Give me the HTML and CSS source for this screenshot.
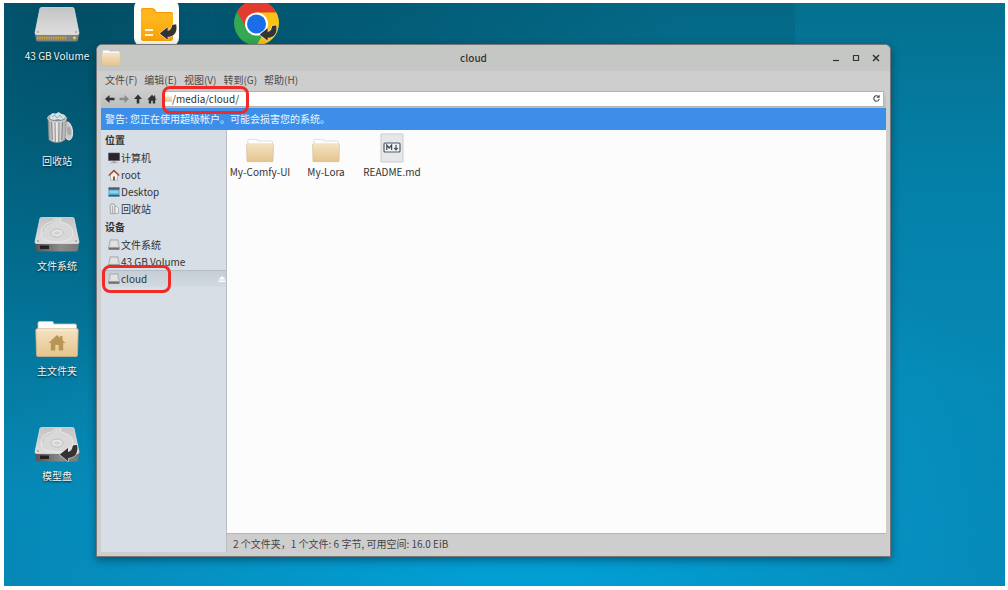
FILE: index.html
```html
<!DOCTYPE html>
<html lang="zh-CN">
<head>
    <meta charset="UTF-8">
    <meta name="viewport" content="width=device-width, initial-scale=1.0">
    <title>cloud</title>
    <link rel="stylesheet" href="styles.css">
</head>
<body>
    <!-- shared icons -->
    <svg class="sprite" aria-hidden="true">
        <defs>
            <linearGradient id="g-folder" x1="0" y1="0" x2="0" y2="1">
                <stop offset="0" stop-color="#f5e2c3"/>
                <stop offset="1" stop-color="#e5c48c"/>
            </linearGradient>
            <linearGradient id="g-metal" x1="0" y1="0" x2="0" y2="1">
                <stop offset="0" stop-color="#c4c4c4"/>
                <stop offset="1" stop-color="#dedede"/>
            </linearGradient>
            <linearGradient id="g-edge" x1="0" y1="0" x2="1" y2="0">
                <stop offset="0" stop-color="#555555"/>
                <stop offset="0.6" stop-color="#8c8c8c"/>
                <stop offset="1" stop-color="#777777"/>
            </linearGradient>
            <linearGradient id="g-can" x1="0" y1="0" x2="1" y2="0">
                <stop offset="0" stop-color="#9c9c9c"/>
                <stop offset="0.4" stop-color="#f0f0f0"/>
                <stop offset="1" stop-color="#a8a8a8"/>
            </linearGradient>
            <linearGradient id="g-yellow" x1="0" y1="0" x2="0" y2="1">
                <stop offset="0" stop-color="#ffb91d"/>
                <stop offset="1" stop-color="#f9a008"/>
            </linearGradient>
        </defs>
        <symbol id="folder" viewBox="0 0 44 36">
            <path d="M3 13V2q0-1.500 1.500-1.500H17q1.500 0 1.500 1.500V3H40q1.500 0 1.500 1.500V13z" fill="#fdfdfd" stroke="#c9c4bb" stroke-width=".8"/>
            <path d="M.8 9q0-1.200 1.200-1.200h40q1.200 0 1.200 1.200L42.500 34q0 1.500-1.500 1.500H3q-1.500 0-1.500-1.500z" fill="url(#g-folder)" stroke="#ccb388" stroke-width=".8"/>
            <path d="M2 9h40" stroke="#fbf0dc"/>
        </symbol>
        <symbol id="disk" viewBox="0 0 46 36">
            <path d="M1 27l1 7q.3 1.500 2 1.500h38q1.700 0 2-1.500l1-7z" fill="url(#g-edge)"/>
            <path d="M7.500 1.500h31q1.300 0 1.600 1.200L45 26q0 1.500-1.500 1.500h-41Q1 27.500 1 26L5.900 2.700q.3-1.200 1.600-1.200z" fill="url(#g-metal)" stroke="#e8e8e8" stroke-width=".7"/>
            <path d="M27 2q-2 4 3 5 9 3 9 10 0 8.500-16 9Q6 25.500 7 17 8 8 17 6q3-1 3-4" fill="#d8d8d8" stroke="#eeeeee" stroke-width=".8"/>
            <path d="M20 2q1 4-5 6-7 3-6 8" fill="none" stroke="#bcbcbc" stroke-width=".7"/>
            <ellipse cx="23" cy="17" rx="6" ry="4" fill="#e4e4e4" stroke="#b6b6b6" stroke-width=".8"/>
            <ellipse cx="23" cy="17" rx="4" ry="2.300" fill="#d2d2d2" stroke="#f4f4f4" stroke-width=".6"/>
            <circle cx="4" cy="25" r=".8" fill="#777"/>
            <circle cx="42" cy="25" r=".8" fill="#777"/>
            <path d="M6 29.500h9v3.500H6z" fill="#222"/>
        </symbol>
        <symbol id="drive-small" viewBox="0 0 12 12">
            <path d="M2 .8h8l1.300 7.700H.7z" fill="#d0d0d0" stroke="#a2a2a2" stroke-width=".7"/>
            <path d="M3 2h6l.6 5H2.400z" fill="#e2e2e2"/>
            <path d="M.5 8.200h11v2.600H.5z" fill="#6f6f6f"/>
            <path d="M1 8h10" stroke="#f5f5f5" stroke-width=".6"/>
        </symbol>
        <symbol id="link-arrow" viewBox="0 0 20 18">
            <path d="M1 10.500L9 4v4q4-.5 5-6.500l4-.5q2 12-9 13v3z" fill="#333" stroke="#e9e9e9" stroke-opacity=".5" stroke-width="2" stroke-linejoin="round"/>
            <path d="M1 10.500L9 4v4q4-.5 5-6.500l4-.5q2 12-9 13v3z" fill="#333"/>
        </symbol>
    </svg>

    <main class="desktop">
        <div class="shortcuts">
            <a class="shortcut" href="#volume">
                <svg class="shortcut-icon" viewBox="0 0 46 36">
                    <path d="M1 28l1 6q.3 1.500 2 1.500h38q1.700 0 2-1.500l1-6z" fill="#808080"/>
                    <path d="M7.500 1.500h31q1.300 0 1.600 1.200L45 27q0 1.500-1.500 1.500h-41Q1 28.500 1 27L5.900 2.700q.3-1.200 1.600-1.200z" fill="url(#g-metal)" stroke="#e8e8e8" stroke-width=".7"/>
                    <circle cx="4" cy="26" r=".8" fill="#777"/>
                    <circle cx="42" cy="26" r=".8" fill="#777"/>
                    <path d="M3 32h30" stroke="#c9a538" stroke-width="3" stroke-dasharray="1.500 .8"/>
                    <circle cx="40.500" cy="32" r="1.400" fill="#e3dc2e"/>
                </svg>
                <span>43 GB Volume</span>
            </a>
            <a class="shortcut" href="#files" aria-label="files">
                <svg class="shortcut-icon app" viewBox="0 0 46 44">
                    <rect x="0" y="-4" width="45" height="48" rx="9" fill="#fffdf8"/>
                    <path d="M7 7q0-2 2-2h9q2 0 3 1.500L22.500 9H37q2 0 2 2v24q0 3-3 3H10q-3 0-3-3z" fill="#f39a05"/>
                    <path d="M7 13h32v22q0 3-3 3H10q-3 0-3-3z" fill="url(#g-yellow)"/>
                    <path d="M7 10q0-4 4-4h6q2 0 3 1.500L22 10h14q3 0 3 3H7z" fill="#ffb61c"/>
                    <path d="M11 27h8M11 32h8" stroke="#fff8d8" stroke-width="2"/>
                    <use href="#link-arrow" x="25" y="20" width="19" height="18"/>
                </svg>
            </a>
            <a class="shortcut" href="#browser" aria-label="browser">
                <svg class="shortcut-icon app" viewBox="0 0 46 44">
                    <circle cx="22.500" cy="20" r="22.500" fill="#34a853"/>
                    <path d="M22.500 20L3 8.800A22.500 22.500 0 0 1 42 8.800z" fill="#e33b2e"/>
                    <path d="M22.500 9.500h19.800A22.500 22.500 0 0 1 22.500 42.500L32.500 25z" fill="#fbc116"/>
                    <path d="M3 8.800L13 26l9.500-6V9.500H3.500z" fill="#e33b2e"/>
                    <circle cx="22.500" cy="21" r="11.500" fill="#fff"/>
                    <circle cx="22.500" cy="21" r="9.500" fill="#1a6fe8"/>
                    <use href="#link-arrow" x="25" y="21" width="19" height="18"/>
                </svg>
            </a>
            <a class="shortcut" href="#trash">
                <svg class="shortcut-icon" viewBox="0 0 46 36">
                    <ellipse cx="34" cy="20" rx="4.500" ry="9" fill="#c9c9c9" stroke="#e4e4e4" transform="rotate(-8 34 20)"/>
                    <ellipse cx="35" cy="20" rx="2" ry="4.500" fill="#a9a9a9" transform="rotate(-8 34 20)"/>
                    <path d="M14 7l1 22q8 5 16 0L32.500 7z" fill="url(#g-can)" stroke="#8b8b8b" stroke-width=".6"/>
                    <path d="M17.500 10l.8 19M21 11l.3 20M25 11l-.2 20M28.500 10l-.7 19" stroke="#858585"/>
                    <ellipse cx="23" cy="7" rx="9.300" ry="4" fill="#878f92" stroke="#e0e0e0"/>
                    <path d="M15.500 6l3-4 3 1 3-2 3 2 3 1 .5 3-4 2-3-1-4 1-4-1z" fill="#d7e2e6"/>
                    <path d="M18 6l3-2 2 3 3-3 2 3" fill="none" stroke="#8fb2be"/>
                </svg>
                <span>回收站</span>
            </a>
            <a class="shortcut" href="#filesystem">
                <svg class="shortcut-icon"><use href="#disk"/></svg>
                <span>文件系统</span>
            </a>
            <a class="shortcut" href="#home">
                <svg class="shortcut-icon" viewBox="0 0 46 36">
                    <use href="#folder" x="1" y="0" width="44" height="36"/>
                    <path d="M23 14l-8.500 8h2.300v7.500h4.500V24h3.400v5.500h4.500V22h2.300l-3-2.800V15h-2.300v2z" fill="#b99555"/>
                </svg>
                <span>主文件夹</span>
            </a>
            <a class="shortcut" href="#models">
                <svg class="shortcut-icon" viewBox="0 0 46 36">
                    <use href="#disk" width="46" height="36"/>
                    <use href="#link-arrow" x="25" y="18" width="20" height="18"/>
                </svg>
                <span>模型盘</span>
            </a>
        </div>

        <section class="window">
            <header class="titlebar">
                <svg class="title-icon"><use href="#folder"/></svg>
                <h1>cloud</h1>
                <button type="button" aria-label="最小化"><svg viewBox="0 0 8 8"><path d="M1 6.500h6" stroke="#333" stroke-width="1.200"/></svg></button>
                <button type="button" aria-label="最大化"><svg viewBox="0 0 8 8"><path d="M1.500 1.500h5v5h-5z" fill="none" stroke="#333" stroke-width="1.200"/></svg></button>
                <button type="button" aria-label="关闭"><svg viewBox="0 0 8 8"><path d="M1 1l6 6M7 1L1 7" stroke="#333" stroke-width="1.500"/></svg></button>
            </header>

            <nav class="menubar">
                <a href="#file">文件(F)</a>
                <a href="#edit">编辑(E)</a>
                <a href="#view">视图(V)</a>
                <a href="#go">转到(G)</a>
                <a href="#help">帮助(H)</a>
            </nav>

            <div class="toolbar">
                <button type="button" aria-label="后退"><svg viewBox="0 0 10 10"><path d="M0 5l4.500-4v2.800H9.500v2.400H4.500V9z" fill="#333"/></svg></button>
                <button type="button" aria-label="前进"><svg viewBox="0 0 10 10"><path d="M10 5L5.500 1v2.800H.5v2.400h5V9z" fill="#8b8b8b"/></svg></button>
                <button type="button" aria-label="上级"><svg viewBox="0 0 10 10"><path d="M5 .5L9 5H6.300v4.500H3.700V5H1z" fill="#333"/></svg></button>
                <button type="button" aria-label="主文件夹"><svg viewBox="0 0 10 10"><path d="M5 .8L.3 5.500h1.500v4h2.400V6.800h1.600v2.700h2.400v-4h1.500L8.200 4V1.500H7v1.300z" fill="#333"/></svg></button>
                <div class="location">
                    <svg class="location-icon"><use href="#folder"/></svg>
                    <input type="text" aria-label="位置" value="/media/cloud/">
                    <button type="button" aria-label="刷新"><svg viewBox="0 0 10 10"><path d="M7.300 3A3 3 0 1 0 8 5.500" fill="none" stroke="#444" stroke-width="1.200"/><path d="M8.500.8v3.400H5z" fill="#444"/></svg></button>
                    <span class="mark mark-path"></span>
                </div>
            </div>

            <p class="warning">警告: 您正在使用超级帐户。可能会损害您的系统。</p>

            <div class="content">
                <aside class="sidebar">
                    <h2>位置</h2>
                    <ul>
                        <li><a href="#computer">
                            <svg viewBox="0 0 12 12"><path d="M.5 1h11v7.500H.5z" fill="#29252c" stroke="#55515a" stroke-width=".6"/><path d="M4.500 9h3v1.200h2v1h-7v-1h2z" fill="#aaa"/></svg>计算机</a></li>
                        <li><a href="#root">
                            <svg viewBox="0 0 12 12"><path d="M2.500 5.500L6 2.500l3.500 3v5.700h-7z" fill="#f5f2ee" stroke="#999" stroke-width=".6"/><path d="M5 7.500h2v3.700H5z" fill="#8f5a34"/><path d="M.8 6.500L6 1.500l5.200 5" fill="none" stroke="#a8452a" stroke-width="1.400"/></svg>root</a></li>
                        <li><a href="#desktop">
                            <svg viewBox="0 0 12 12"><path d="M.5 1.500h11v9H.5z" fill="#4aa4cf"/><path d="M.5 1.500h11v2H.5z" fill="#50575e"/><path d="M1.500 4.500h9v3h-9z" fill="#8fd4ee"/><path d="M.5 9h11v1.500H.5z" fill="#405a68"/></svg>Desktop</a></li>
                        <li><a href="#trash">
                            <svg viewBox="0 0 12 12"><path d="M2 2.500L3 1h3l1 1.500v8.200H2.500z" fill="#e3e3e3" stroke="#8d8d8d" stroke-width=".7"/><path d="M4.500 3v7" stroke="#999" stroke-width=".7"/><path d="M7 3.500h2l1.500 2v5H7z" fill="#efefef" stroke="#999" stroke-width=".7"/></svg>回收站</a></li>
                    </ul>
                    <h2>设备</h2>
                    <ul>
                        <li><a href="#filesystem"><svg><use href="#drive-small"/></svg>文件系统</a></li>
                        <li><a href="#volume"><svg><use href="#drive-small"/></svg>43 GB Volume</a></li>
                        <li class="selected">
                            <a href="#cloud"><svg><use href="#drive-small"/></svg>cloud</a>
                            <button type="button" aria-label="弹出"><svg viewBox="0 0 8 8"><path d="M4 1l3.500 3.500h-7zM.5 5.500h7V7h-7z" fill="#fff"/></svg></button>
                            <span class="mark mark-device"></span>
                        </li>
                    </ul>
                </aside>

                <div class="main">
                    <div class="files">
                        <a class="file" href="#comfy"><svg class="file-icon"><use href="#folder" x="0" y="5" width="28" height="25"/></svg>My-Comfy-UI</a>
                        <a class="file" href="#lora"><svg class="file-icon"><use href="#folder" x="0" y="5" width="28" height="25"/></svg>My-Lora</a>
                        <a class="file" href="#readme">
                            <svg class="file-icon" viewBox="0 0 28 30">
                                <path d="M3 1h22v28H3z" fill="#e6e7e8" stroke="#c9cbcc"/>
                                <rect x="6" y="10" width="16" height="9" rx="1" fill="#f4f6f7" stroke="#4a5b68" stroke-width="1.200"/>
                                <path d="M8.800 17v-5l2.400 3 2.400-3v5" fill="none" stroke="#3f505d" stroke-width="1.300"/>
                                <path d="M18 11.800v4.200M16.200 14.800l1.800 2 1.800-2" fill="none" stroke="#3f505d" stroke-width="1.200"/>
                            </svg>README.md</a>
                    </div>
                    <footer class="statusbar">2 个文件夹，1 个文件: 6 字节, 可用空间: 16.0 EiB</footer>
                </div>
            </div>
        </section>
    </main>
</body>
</html>
```
FILE: styles.css
```css
* {
    box-sizing: border-box;
}
body {
    display: flex;
    min-height: 100vh;
    margin: 0;
    padding: 3px 3px 4px 4px;
    background-color: #fff;
    color: #333;
    font-family: 'Noto Sans CJK SC', 'Noto Sans', sans-serif;
    font-size: 10px;
    line-height: 16px;
}
a {
    color: inherit;
    text-decoration: none;
}
button {
    display: flex;
    align-items: center;
    justify-content: center;
    margin: 0;
    padding: 0;
    border: none;
    background: none;
}
.sprite {
    position: absolute;
    width: 0;
    height: 0;
}

/* desktop */
.desktop {
    position: relative;
    flex: 1;
    overflow: hidden;
    background:
        linear-gradient(to right, transparent 21%, rgba(0, 80, 105, 0.25) 21%, rgba(0, 80, 105, 0.25) 79%, transparent 79%) top / 100% 42px no-repeat,
        radial-gradient(ellipse 60% 75% at 52% 108%, rgba(0, 172, 228, 0.75), transparent),
        radial-gradient(ellipse 60% 85% at 8% 0%, rgba(0, 72, 94, 0.85), transparent),
        linear-gradient(to bottom, #05708f, #0480a8 30%, #0689b5 65%, #0784b2);
}
.shortcuts {
    display: grid;
    grid-template-columns: repeat(3, 100px);
    grid-auto-rows: 105px;
    padding-left: 3px;
}
.shortcut {
    display: flex;
    flex-direction: column;
    align-items: center;
    gap: 6px;
    padding-top: 3px;
    color: #f2f6f8;
    text-shadow: 0 1px 2px rgba(0, 0, 0, 0.8);
}
.shortcut:nth-child(n+4) {
    grid-column: 1;
}
.shortcut-icon {
    width: 46px;
    height: 36px;
}
.shortcut-icon.app {
    height: 44px;
    margin-top: -3px;
}

/* window */
.window {
    position: absolute;
    top: 41px;
    right: 114px;
    bottom: 29px;
    left: 92px;
    display: flex;
    flex-direction: column;
    padding: 0 4px 4px;
    border: 1px solid #777;
    border-radius: 6px 6px 1px 1px;
    background-color: #cecece;
    box-shadow: 0 3px 8px rgba(0, 30, 45, 0.5);
}
.titlebar {
    display: flex;
    align-items: center;
    height: 26px;
    margin: 0 -4px;
    padding: 0 4px;
    border-radius: 5px 5px 0 0;
    background-color: #c5c7c5;
}
.title-icon {
    width: 20px;
    height: 16px;
}
.titlebar h1 {
    flex: 1;
    margin: 0;
    font-size: 10px;
    font-weight: 500;
    text-align: center;
}
.titlebar button {
    width: 20px;
    height: 20px;
}
.titlebar button svg {
    width: 8px;
    height: 8px;
}
.menubar {
    display: flex;
    gap: 7px;
    padding: 1px 4px;
    color: #4a4a4a;
}
.toolbar {
    display: flex;
    align-items: center;
    height: 19px;
    padding: 0 2px;
    background: linear-gradient(to bottom, #cecece, #bdbdbd);
}
.toolbar button {
    width: 14px;
    height: 14px;
}
.toolbar button svg {
    width: 10px;
    height: 10px;
}
.location {
    position: relative;
    display: flex;
    flex: 1;
    align-items: center;
    height: 16px;
    margin-left: 4px;
    border: 1px solid #b3b3b3;
    background-color: #fff;
}
.location-icon {
    width: 8px;
    height: 7px;
}
.location input {
    flex: 1;
    min-width: 0;
    height: 14px;
    padding: 0;
    border: none;
    outline: none;
    background: none;
    color: #333;
    font: inherit;
}
.location button svg {
    width: 9px;
    height: 9px;
}
.warning {
    margin: 0;
    padding: 3px 4px;
    background-color: #3c8ee9;
    color: #eef5fd;
}
.content {
    display: flex;
    flex: 1;
    min-height: 0;
}

/* sidebar */
.sidebar {
    width: 125px;
    padding-top: 1px;
    background-color: #d8dee5;
}
.sidebar h2 {
    margin: 0;
    padding: 0 4px;
    font-size: 10px;
    font-weight: bold;
    line-height: 18px;
}
.sidebar ul {
    margin: 0 0 1px;
    padding: 0;
    list-style: none;
}
.sidebar li {
    position: relative;
    display: flex;
    align-items: center;
    height: 17px;
    padding-left: 7px;
}
.sidebar li a {
    display: flex;
    flex: 1;
    align-items: center;
    gap: 1px;
}
.sidebar li a svg {
    width: 12px;
    height: 12px;
}
.sidebar .selected {
    border-top: 1px solid #b4bcc5;
    background: linear-gradient(to bottom, #c5cdd6, #d3dae1);
}
.selected button svg {
    width: 8px;
    height: 8px;
}

/* files */
.main {
    display: flex;
    flex: 1;
    flex-direction: column;
    border-left: 1px solid #b9bec4;
}
.files {
    display: flex;
    flex: 1;
    align-items: flex-start;
    padding-top: 3px;
    background-color: #fcfcfc;
}
.file {
    display: flex;
    flex-direction: column;
    align-items: center;
    gap: 1px;
    width: 66px;
    white-space: nowrap;
}
.file-icon {
    width: 28px;
    height: 30px;
}
.statusbar {
    padding: 2px 6px 0;
    border-top: 1px solid #b5b5b5;
    color: #444;
}

/* red outlines */
.mark {
    position: absolute;
    border: 3px solid #f02b25;
    border-radius: 8px;
    pointer-events: none;
}
.mark-path {
    top: -6px;
    left: -2px;
    width: 87px;
    height: 28px;
}
.mark-device {
    top: -6px;
    left: 1px;
    width: 69px;
    height: 28px;
}
```
